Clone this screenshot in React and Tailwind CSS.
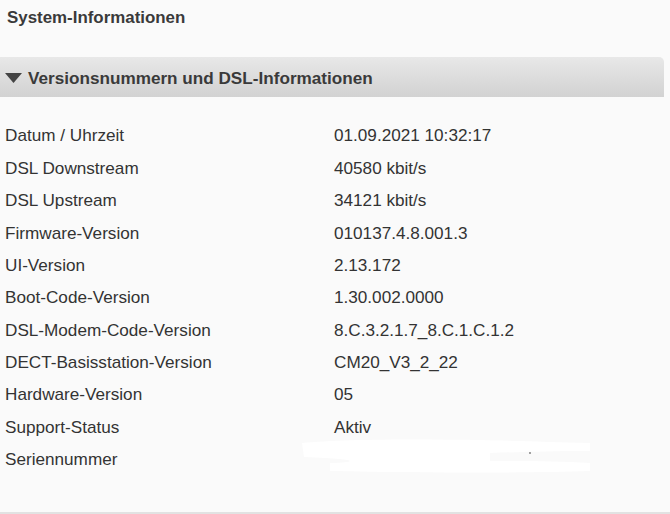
import React from "react";

const rows = [
  ["Datum / Uhrzeit", "01.09.2021 10:32:17"],
  ["DSL Downstream", "40580 kbit/s"],
  ["DSL Upstream", "34121 kbit/s"],
  ["Firmware-Version", "010137.4.8.001.3"],
  ["UI-Version", "2.13.172"],
  ["Boot-Code-Version", "1.30.002.0000"],
  ["DSL-Modem-Code-Version", "8.C.3.2.1.7_8.C.1.C.1.2"],
  ["DECT-Basisstation-Version", "CM20_V3_2_22"],
  ["Hardware-Version", "05"],
  ["Support-Status", "Aktiv"],
  ["Seriennummer", null],
];

function Redaction() {
  return (
    <svg width="300" height="40" viewBox="0 0 300 40" className="-ml-[34px] -mt-[6px] block">
      <path d="M2 6 C40 2 120 2 180 3 C220 4 250 5 290 6 L290 14 C250 14 220 15 190 16 L190 24 C230 24 260 24 290 26 L290 34 C230 36 140 36 30 34 L30 26 C60 25 60 22 4 20 Z" fill="#ffffff" />
      <circle cx="230" cy="16" r="0.9" fill="#777" />
    </svg>
  );
}

export default function App() {
  return (
    <div className="w-[670px] h-[514px] bg-[#fafafa] flex flex-col font-['Liberation_Sans',Arial,sans-serif] text-[#333]">
      <div className="pl-[7px] pt-[5px] h-[57px] text-[16.9px] font-bold text-[#3a3a3a]">System-Informationen</div>
      <div className="w-[664px] h-[40px] rounded-tr-[5px] bg-gradient-to-b from-[#e8e8e8] to-[#d2d2d2] flex items-center pl-[5px] pt-[3px] gap-[6px]">
        <svg width="17" height="10" viewBox="0 0 17 10" className="mt-[-2px]">
          <path d="M0 0 H17 L8.5 10 Z" fill="#444" />
        </svg>
        <span className="text-[17.15px] font-bold text-[#3a3a3a]">Versionsnummern und DSL-Informationen</span>
      </div>
      <div className="flex flex-col pt-[23px]">
        {rows.map(([k, v]) => (
          <div key={k} className="flex h-[32.4px] items-center text-[17.15px] text-[#333]">
            <div className="w-[334px] pl-[5px]">{k}</div>
            <div>{v === null ? <Redaction /> : v}</div>
          </div>
        ))}
      </div>
      <div className="flex-1" />
      <div className="h-[2px] bg-[#e2e2e2]" />
    </div>
  );
}
